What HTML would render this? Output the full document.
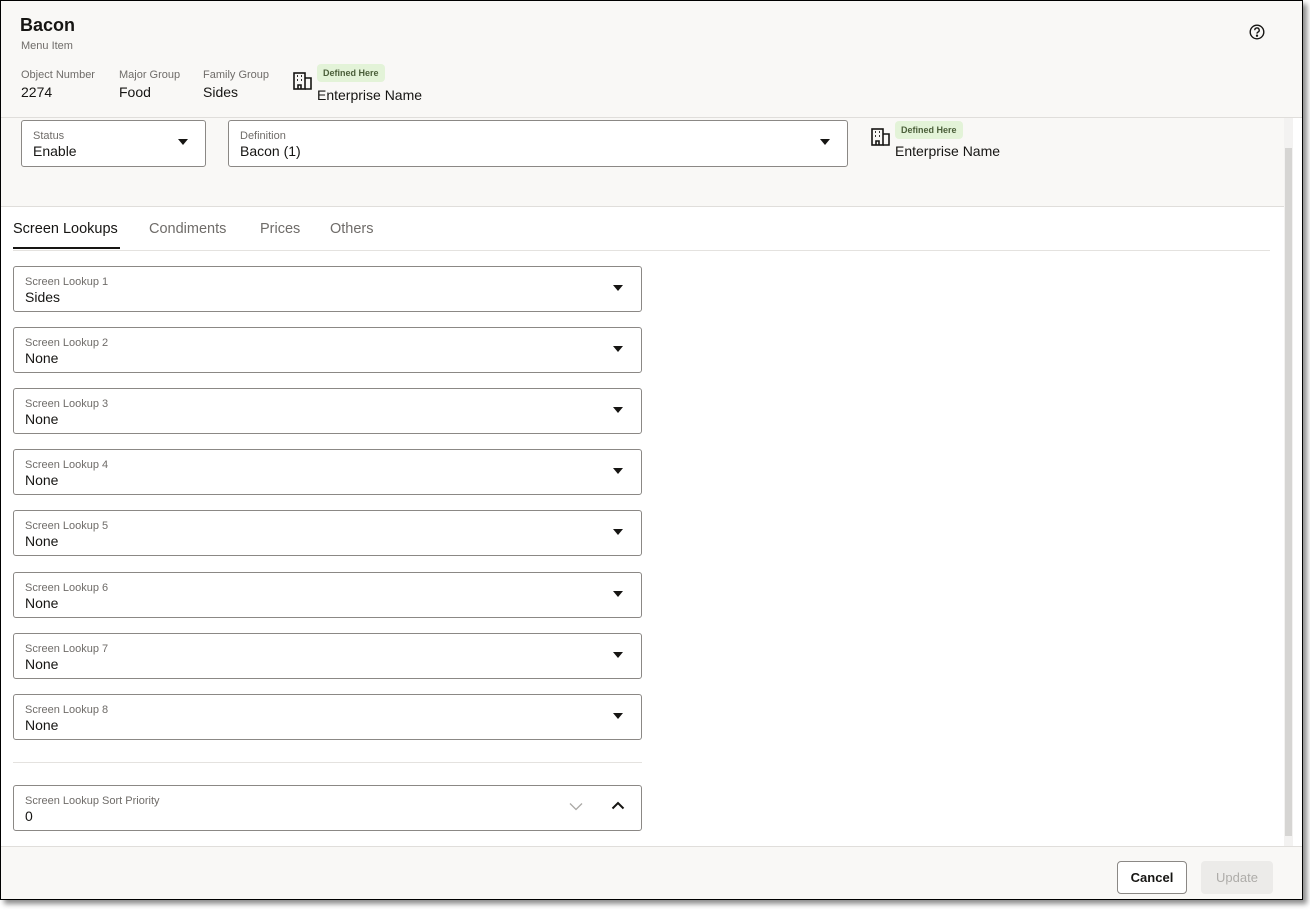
<!DOCTYPE html>
<html><head><style>
*{box-sizing:border-box;margin:0;padding:0}
body{width:1310px;height:915px;background:#fff;font-family:"Liberation Sans",sans-serif;color:#161513;position:relative;overflow:hidden}
.win{position:absolute;left:0;top:0;width:1303px;height:900px;background:#fff;box-shadow:4px 4px 5px rgba(0,0,0,.45);overflow:hidden}
.frame{position:absolute;left:0;top:0;width:1303px;height:900px;border:1px solid #000;z-index:10}
.hdr{position:absolute;left:0;top:0;width:1303px;height:118px;background:#f9f8f6;border-bottom:1px solid #e0dedb}
.form{position:absolute;left:0;top:118px;width:1284px;height:89px;background:#f9f8f6;border-bottom:1px solid #e0dedb}
.abs{position:absolute}
.sm{font-size:11px;color:#6f6c69}
.val{font-size:14px;color:#161513}
.badge{position:absolute;background:#e3f3d8;color:#4b5f3a;font-size:9px;font-weight:bold;padding:4px 6px;border-radius:4px}
.box{position:absolute;border:1px solid #8b8885;border-radius:3px;background:#fff}
.box .l{position:absolute;left:11px;top:9px;font-size:11px;color:#6f6c69}
.box .v{position:absolute;left:11px;top:22px;font-size:14px}
.caret{position:absolute;width:0;height:0;border-left:5px solid transparent;border-right:5px solid transparent;border-top:6px solid #161513}
.tab{position:absolute;top:221px;font-size:14.5px;color:#6f6c69}
.foot{position:absolute;left:0;top:846px;width:1303px;height:54px;background:#f9f8f6;border-top:1px solid #e0dedb}
.btn{position:absolute;border-radius:4px;font-size:13px;text-align:center;line-height:31px}
</style></head><body>
<div class="win">
<div class="hdr">
 <div class="abs" style="left:20px;top:15px;font-size:18px;font-weight:bold">Bacon</div>
 <div class="abs sm" style="left:21px;top:40px">Menu Item</div>
 <div class="abs sm" style="left:21px;top:69px">Object Number</div>
 <div class="abs val" style="left:21px;top:84px">2274</div>
 <div class="abs sm" style="left:119px;top:69px">Major Group</div>
 <div class="abs val" style="left:119px;top:84px">Food</div>
 <div class="abs sm" style="left:203px;top:69px">Family Group</div>
 <div class="abs val" style="left:203px;top:84px">Sides</div>
 <svg class="abs" style="left:293px;top:72px" width="19" height="18" viewBox="0 0 19 18" fill="none" stroke="#161513" stroke-width="1.6"><rect x="1" y="1" width="11" height="16"/><path d="M12 6h6v11h-6M5 17v-4h3v4"/><path d="M4 4h1M8 4h1M4 8h1M8 8h1" stroke-width="1.8"/></svg>
 <div class="badge" style="left:317px;top:64px">Defined Here</div>
 <div class="abs val" style="left:317px;top:87px">Enterprise Name</div>
 <svg class="abs" style="left:1249px;top:24px" width="16" height="16" viewBox="0 0 16 16" fill="none" stroke="#161513" stroke-width="1.4"><circle cx="8" cy="8" r="6.8"/><path d="M5.8 6.2a2.2 2.2 0 1 1 3 2c-.6.3-.8.7-.8 1.4"/><circle cx="8" cy="11.7" r=".5" fill="#161513"/></svg>
</div>
<div class="form">
 <div class="box" style="left:21px;top:2px;width:185px;height:47px"><div class="l">Status</div><div class="v">Enable</div><div class="caret" style="left:156px;top:18px"></div></div>
 <div class="box" style="left:228px;top:2px;width:620px;height:47px"><div class="l">Definition</div><div class="v">Bacon (1)</div><div class="caret" style="left:591px;top:18px"></div></div>
 <svg class="abs" style="left:871px;top:10px" width="19" height="18" viewBox="0 0 19 18" fill="none" stroke="#161513" stroke-width="1.6"><rect x="1" y="1" width="11" height="16"/><path d="M12 6h6v11h-6M5 17v-4h3v4"/><path d="M4 4h1M8 4h1M4 8h1M8 8h1" stroke-width="1.8"/></svg>
 <div class="badge" style="left:895px;top:3px">Defined Here</div>
 <div class="abs val" style="left:895px;top:25px">Enterprise Name</div>
</div>
<div class="abs" style="left:1284px;top:118px;width:9px;height:728px;background:#f3f2f1"></div>
<div class="abs" style="left:1285px;top:148px;width:7px;height:688px;background:#d6d5d3"></div>
<div class="tab" style="left:13px;color:#161513">Screen Lookups</div>
<div class="tab" style="left:149px">Condiments</div>
<div class="tab" style="left:260px">Prices</div>
<div class="tab" style="left:330px">Others</div>
<div class="abs" style="left:13px;top:250px;width:1257px;height:1px;background:#e4e2df"></div>
<div class="abs" style="left:13px;top:247px;width:107px;height:2px;background:#161513"></div>

<div class="box" style="left:13px;top:266px;width:629px;height:46px"><div class="l">Screen Lookup 1</div><div class="v">Sides</div><div class="caret" style="left:599px;top:18px"></div></div>
<div class="box" style="left:13px;top:327px;width:629px;height:46px"><div class="l">Screen Lookup 2</div><div class="v">None</div><div class="caret" style="left:599px;top:18px"></div></div>
<div class="box" style="left:13px;top:388px;width:629px;height:46px"><div class="l">Screen Lookup 3</div><div class="v">None</div><div class="caret" style="left:599px;top:18px"></div></div>
<div class="box" style="left:13px;top:449px;width:629px;height:46px"><div class="l">Screen Lookup 4</div><div class="v">None</div><div class="caret" style="left:599px;top:18px"></div></div>
<div class="box" style="left:13px;top:510px;width:629px;height:46px"><div class="l">Screen Lookup 5</div><div class="v">None</div><div class="caret" style="left:599px;top:18px"></div></div>
<div class="box" style="left:13px;top:572px;width:629px;height:46px"><div class="l">Screen Lookup 6</div><div class="v">None</div><div class="caret" style="left:599px;top:18px"></div></div>
<div class="box" style="left:13px;top:633px;width:629px;height:46px"><div class="l">Screen Lookup 7</div><div class="v">None</div><div class="caret" style="left:599px;top:18px"></div></div>
<div class="box" style="left:13px;top:694px;width:629px;height:46px"><div class="l">Screen Lookup 8</div><div class="v">None</div><div class="caret" style="left:599px;top:18px"></div></div>
<div class="abs" style="left:13px;top:762px;width:629px;height:1px;background:#e4e2df"></div>
<div class="box" style="left:13px;top:785px;width:629px;height:46px"><div class="l">Screen Lookup Sort Priority</div><div class="v">0</div>
 <svg class="abs" style="left:555px;top:16px" width="14" height="9" viewBox="0 0 14 9" fill="none" stroke="#aaa8a5" stroke-width="1.3"><path d="M1 1.5l6 6 6-6"/></svg>
 <svg class="abs" style="left:597px;top:15px" width="14" height="9" viewBox="0 0 14 9" fill="none" stroke="#161513" stroke-width="2"><path d="M1.5 7.5l5.5-5.5 5.5 5.5"/></svg>
</div>
<div class="foot">
 <div class="btn" style="left:1117px;top:14px;width:70px;height:33px;border:1px solid #8b8885;background:#fff;font-weight:bold;color:#161513">Cancel</div>
 <div class="btn" style="left:1201px;top:14px;width:72px;height:33px;background:#ecebe9;color:#aeaca9;line-height:33px">Update</div>
</div>
<div class="frame"></div>
</div>
</body></html>
